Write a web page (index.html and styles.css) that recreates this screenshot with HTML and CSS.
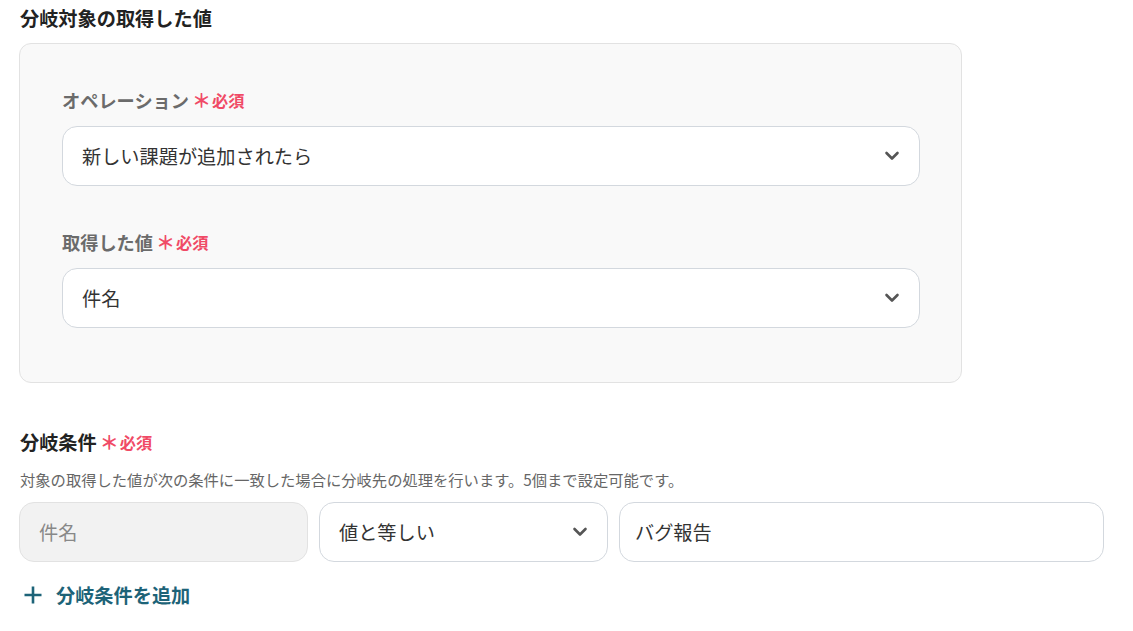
FILE: index.html
```html
<!DOCTYPE html>
<html lang="ja">
<head>
<meta charset="utf-8">
<link rel="stylesheet" href="styles.css">
</head>
<body>
<div class="page">
  <h2 class="section-title">分岐対象の取得した値</h2>
  <div class="panel">
    <div class="field">
      <div class="label">オペレーション<span class="req"><span class="ast">＊</span>必須</span></div>
      <div class="select">
        <span>新しい課題が追加されたら</span>
        <svg class="chev" width="16" height="10" viewBox="0 0 16 10"><path d="M2.5 2 L8 7.5 L13.5 2" fill="none" stroke="#555" stroke-width="2.6" stroke-linecap="round" stroke-linejoin="round"/></svg>
      </div>
    </div>
    <div class="field">
      <div class="label">取得した値<span class="req"><span class="ast">＊</span>必須</span></div>
      <div class="select">
        <span>件名</span>
        <svg class="chev" width="16" height="10" viewBox="0 0 16 10"><path d="M2.5 2 L8 7.5 L13.5 2" fill="none" stroke="#555" stroke-width="2.6" stroke-linecap="round" stroke-linejoin="round"/></svg>
      </div>
    </div>
  </div>

  <h2 class="section-title cond-title">分岐条件<span class="req"><span class="ast">＊</span>必須</span></h2>
  <p class="desc">対象の取得した値が次の条件に一致した場合に分岐先の処理を行います。5個まで設定可能です。</p>
  <div class="cond-row">
    <div class="box box-disabled">件名</div>
    <div class="box box-select">
      <span>値と等しい</span>
      <svg class="chev" width="16" height="10" viewBox="0 0 16 10"><path d="M2.5 2 L8 7.5 L13.5 2" fill="none" stroke="#555" stroke-width="2.6" stroke-linecap="round" stroke-linejoin="round"/></svg>
    </div>
    <div class="box box-input">バグ報告</div>
  </div>
  <div class="add">
    <svg width="20" height="20" viewBox="0 0 20 20"><path d="M10 1.5 V18.5 M1.5 10 H18.5" stroke="#1d6378" stroke-width="2.6" fill="none"/></svg>
    <span>分岐条件を追加</span>
  </div>
</div>
</body>
</html>
```
FILE: styles.css
```css
* { box-sizing: border-box; }
html, body { margin: 0; padding: 0; background: #fff; }
body {
  font-family: "Noto Sans CJK JP", "Roboto", "Noto Sans", sans-serif;
  color: #333;
}
.page {
  padding: 4px 0 0 19px;
  width: 1133px;
}
.section-title {
  margin: 0;
  font-size: 19.2px;
  font-weight: 700;
  color: #222;
  line-height: 28px;
  padding-left: 1px;
  display: flex;
  align-items: center;
}
.panel {
  margin-top: 11px;
  width: 943px;
  height: 340px;
  background: #f9f9f9;
  border: 1px solid #e2e2e2;
  border-radius: 12px;
  padding: 43px 41px 0 42px;
  display: flex;
  flex-direction: column;
  gap: 43px;
}
.field { display: flex; flex-direction: column; gap: 13px; }
.label {
  font-size: 18.2px;
  font-weight: 700;
  color: #6b6b6b;
  line-height: 26px;
  display: flex;
  align-items: center;
}
.req {
  color: #f04a66;
  font-size: 16.2px;
  font-weight: 700;
  display: inline-flex;
  align-items: center;
  margin-left: 3px;
}
.ast { font-size: 19px; margin-right: 1px; font-weight: 700; }
.select {
  height: 60px;
  background: #fff;
  border: 1px solid #d3d8de;
  border-radius: 15px;
  display: flex;
  align-items: center;
  justify-content: space-between;
  padding: 0 19px 0 19px;
  font-size: 19.2px;
  color: #333;
}
.chev { flex: none; }
.cond-title { margin-top: 45px; }
.desc {
  margin: 12px 0 0 1px;
  font-size: 15.3px;
  color: #666;
  line-height: 22px;
}
.cond-row {
  margin-top: 12px;
  display: flex;
  gap: 11px;
}
.box {
  height: 60px;
  border: 1px solid #d3d8de;
  border-radius: 15px;
  display: flex;
  align-items: center;
  padding: 0 19px;
  font-size: 19.2px;
  color: #333;
}
.box-disabled {
  width: 289px;
  background: #f2f2f2;
  border-color: #e2e2e2;
  color: #888;
}
.box-select {
  width: 289px;
  justify-content: space-between;
  background: #fff;
}
.box-input {
  width: 485px;
  padding-left: 15px;
  background: #fff;
}
.add {
  margin-top: 19px;
  display: flex;
  align-items: center;
  gap: 13px;
  padding-left: 4px;
  font-size: 19.2px;
  font-weight: 700;
  line-height: 28px;
  color: #1d6378;
}
```
